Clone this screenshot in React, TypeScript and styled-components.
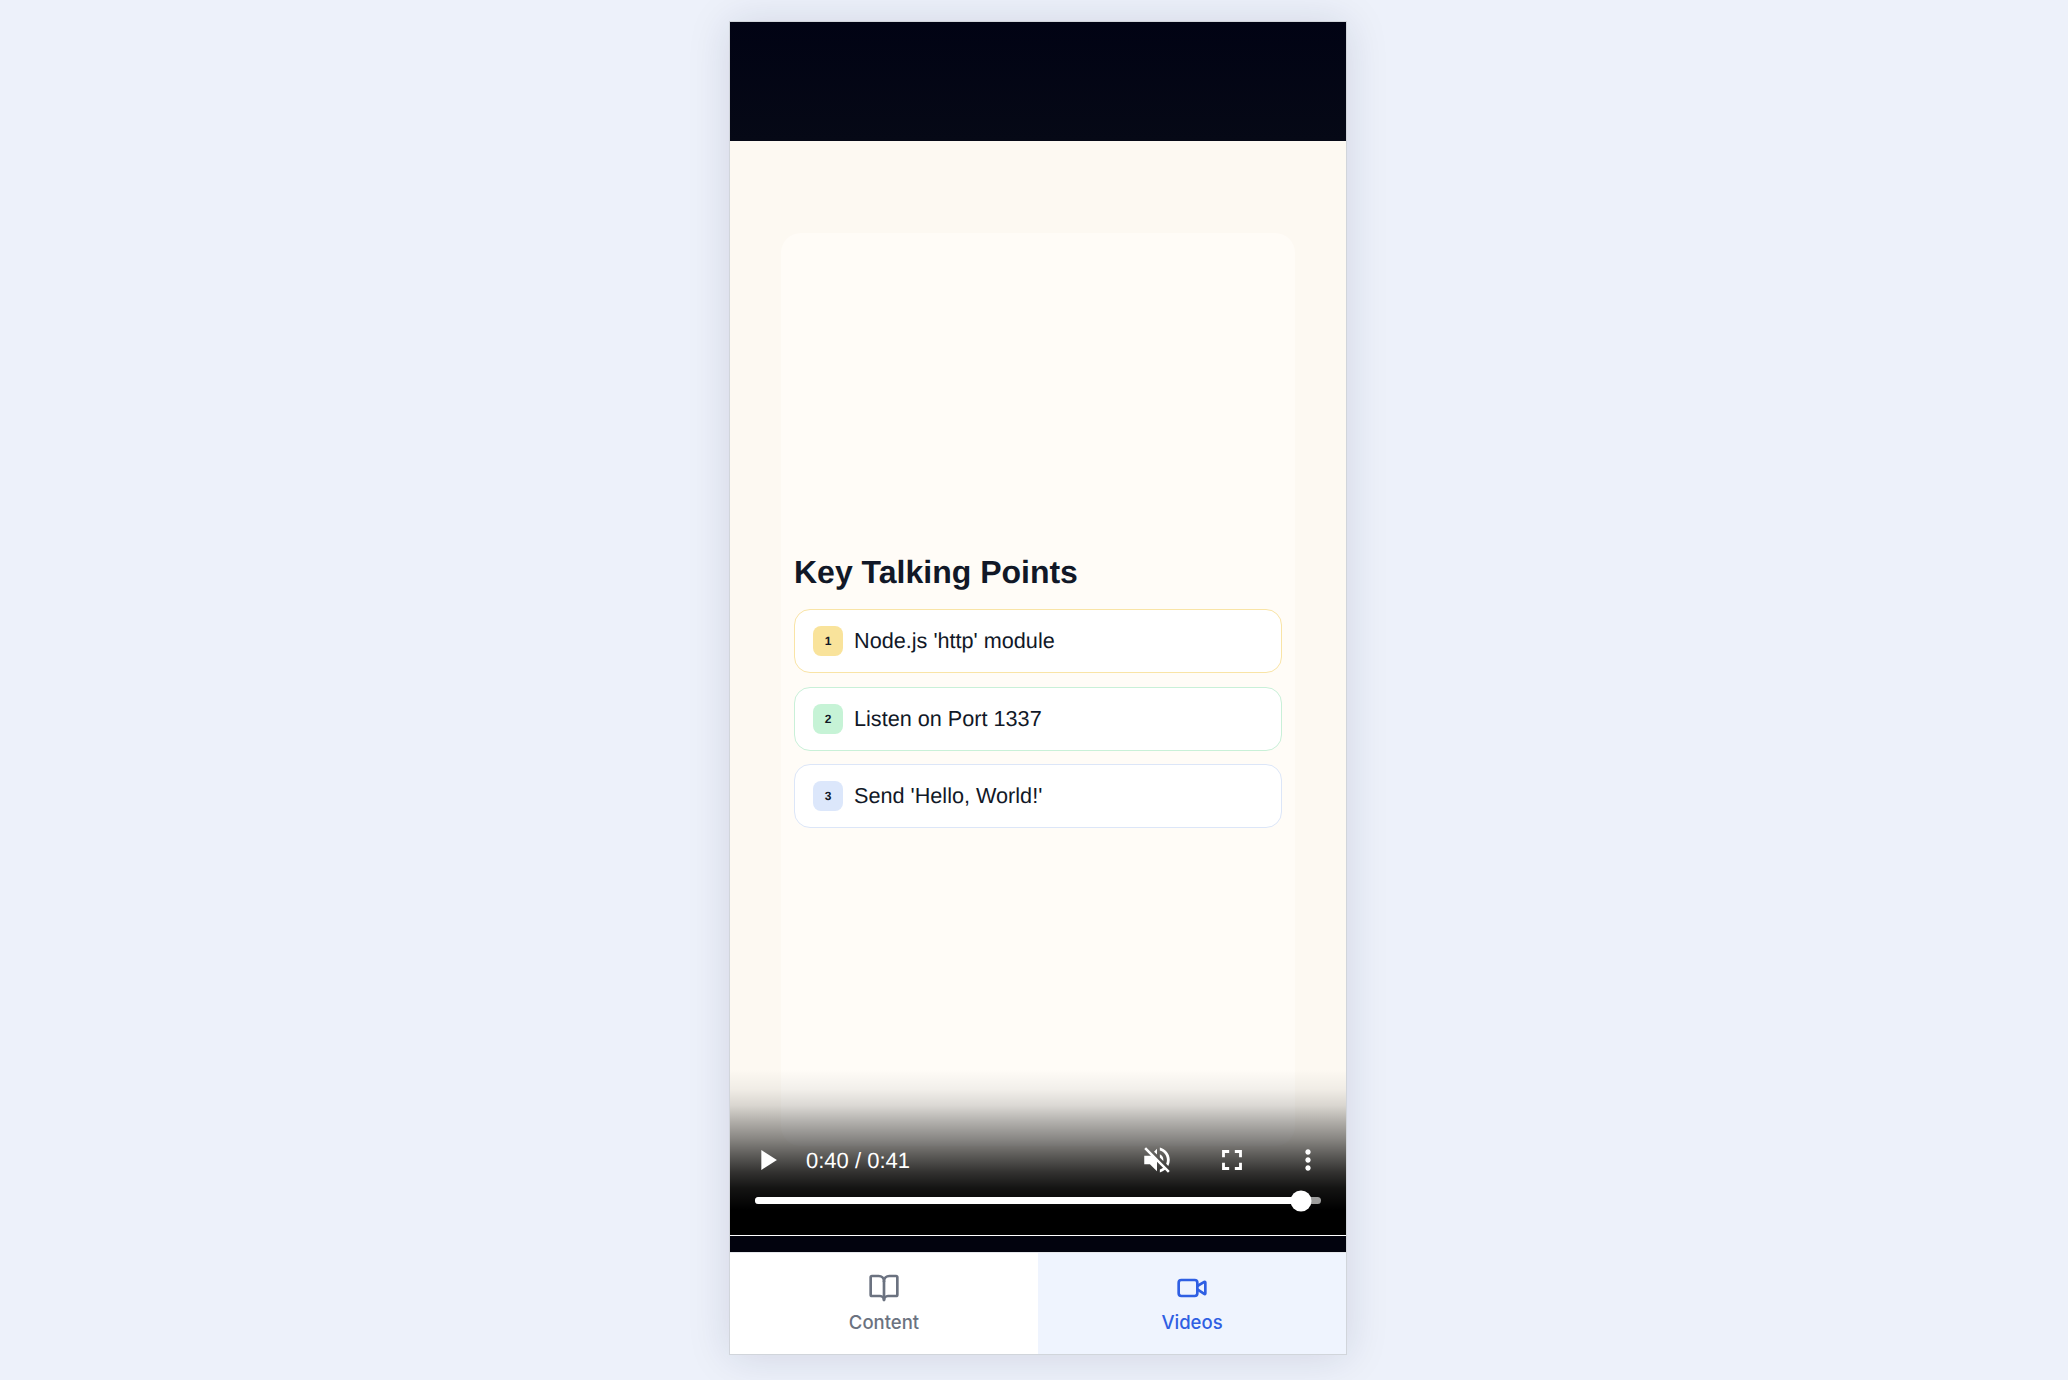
import React from "react";
import styled, { createGlobalStyle } from "styled-components";
import { BookOpen, Video } from "lucide-react";
import { MdPlayArrow, MdVolumeOff, MdFullscreen, MdMoreVert } from "react-icons/md";

const GlobalStyle = createGlobalStyle`
  html, body {
    margin: 0;
    padding: 0;
    background: #edf1fa;
    font-family: "Liberation Sans", Arial, sans-serif;
  }
`;

const Page = styled.div`
  height: 1380px;
  box-sizing: border-box;
  padding: 21px 0 25px 8px;
  display: flex;
  justify-content: center;
  overflow: hidden;
`;

const Phone = styled.div`
  width: 618px;
  box-sizing: border-box;
  border: 1px solid #d1d5db;
  display: flex;
  flex-direction: column;
  background: #fff;
  box-shadow: 0 2px 40px rgba(20, 30, 70, 0.13);
`;

const Player = styled.div`
  flex: 1;
  display: flex;
  flex-direction: column;
  background: #02030e;
`;

const TopBar = styled.div`
  height: 119px;
  flex: none;
  background: linear-gradient(to bottom, #010314, #060916);
`;

const BottomBar = styled.div`
  height: 16px;
  flex: none;
`;

const Stage = styled.div`
  position: relative;
  flex: 1;
  display: flex;
  background: #fdf9f2;
  padding: 92px 51px 89px;
  border-bottom: 1px solid #fff;
  text-rendering: geometricPrecision;
`;

const SlideCard = styled.section`
  flex: 1;
  display: flex;
  flex-direction: column;
  justify-content: center;
  gap: 17.3px;
  padding: 1px 13px 0;
  background: #fffcf7;
  border-radius: 20px;
`;

const Heading = styled.h2`
  margin: 0;
  font-size: 32px;
  line-height: 40px;
  font-weight: 700;
  color: #111827;
`;

const Points = styled.ul`
  list-style: none;
  margin: 0;
  padding: 0;
  display: flex;
  flex-direction: column;
  gap: 13.4px;
`;

const Point = styled.li<{ $border: string }>`
  height: 64px;
  box-sizing: border-box;
  display: flex;
  align-items: center;
  gap: 11px;
  padding: 0 18px;
  background: #fff;
  border: 1.5px solid ${({ $border }) => $border};
  border-radius: 16px;
  font-size: 21.65px;
  color: #111827;
`;

const Badge = styled.span<{ $bg: string }>`
  width: 30px;
  height: 30px;
  flex: none;
  display: flex;
  align-items: center;
  justify-content: center;
  border-radius: 8px;
  background: ${({ $bg }) => $bg};
  font-size: 12px;
  font-weight: 700;
`;

const Controls = styled.div`
  position: absolute;
  left: 0;
  right: 0;
  bottom: 0;
  height: 180px;
  display: flex;
  flex-direction: column;
  justify-content: flex-end;
  padding: 0 25px 31px;
  box-sizing: border-box;
  background: linear-gradient(
    to bottom,
    rgba(0, 0, 0, 0) 8%,
    rgba(0, 0, 0, 0.05) 19%,
    rgba(0, 0, 0, 0.14) 28%,
    rgba(0, 0, 0, 0.3) 37%,
    rgba(0, 0, 0, 0.47) 47%,
    rgba(0, 0, 0, 0.64) 56%,
    rgba(0, 0, 0, 0.8) 65%,
    rgba(0, 0, 0, 0.92) 74%,
    #000 86%
  );
  color: #fff;
`;

const ControlRow = styled.div`
  display: flex;
  align-items: center;
  height: 40px;
  margin: 0 -3px 17px -5px;
`;

const Time = styled.span`
  font-size: 22px;
  margin-left: 22px;
  flex: 1;
  padding-top: 1px;
`;

const ControlIcon = styled.span<{ $gap?: number }>`
  display: flex;
  margin-left: ${({ $gap }) => $gap ?? 0}px;
`;

const Track = styled.div`
  position: relative;
  height: 7px;
  border-radius: 4px;
  background: rgba(255, 255, 255, 0.6);
`;

const Fill = styled.div`
  height: 100%;
  border-radius: 4px;
  background: #fff;
`;

const Thumb = styled.div`
  position: absolute;
  top: 50%;
  width: 21px;
  height: 21px;
  border-radius: 50%;
  background: #fff;
  transform: translate(-50%, -50%);
`;

const Tabs = styled.nav`
  display: grid;
  grid-template-columns: 1fr 1fr;
  height: 102px;
  flex: none;
  border-top: 1px solid #e5e7eb;
  box-sizing: border-box;
`;

const Tab = styled.button<{ $active?: boolean }>`
  border: 0;
  display: flex;
  flex-direction: column;
  align-items: center;
  justify-content: center;
  gap: 7px;
  padding: 0 0 2px;
  font-family: Inter, sans-serif;
  font-size: 18.5px;
  font-weight: 500;
  color: ${({ $active }) => ($active ? "#2f5fe3" : "#6b7280")};
  background: ${({ $active }) => ($active ? "#eff4fe" : "#fff")};
`;

const points = [
  { text: "Node.js 'http' module", border: "#f9e4a6", badge: "#f9e39b" },
  { text: "Listen on Port 1337", border: "#c9f0d8", badge: "#c6f3d6" },
  { text: "Send 'Hello, World!'", border: "#dce6f8", badge: "#dce7fb" },
];

const progress = 96.5;

export default function App() {
  return (
    <Page>
      <GlobalStyle />
      <Phone>
        <Player>
          <TopBar />
          <Stage>
            <SlideCard>
              <Heading>Key Talking Points</Heading>
              <Points>
                {points.map((p, i) => (
                  <Point key={p.text} $border={p.border}>
                    <Badge $bg={p.badge}>{i + 1}</Badge>
                    {p.text}
                  </Point>
                ))}
              </Points>
            </SlideCard>
            <Controls>
              <ControlRow>
                <ControlIcon>
                  <MdPlayArrow size={34} />
                </ControlIcon>
                <Time>0:40 / 0:41</Time>
                <ControlIcon>
                  <MdVolumeOff size={34} />
                </ControlIcon>
                <ControlIcon $gap={41}>
                  <MdFullscreen size={34} />
                </ControlIcon>
                <ControlIcon $gap={43}>
                  <MdMoreVert size={32} />
                </ControlIcon>
              </ControlRow>
              <Track>
                <Fill style={{ width: `${progress}%` }} />
                <Thumb style={{ left: `${progress}%` }} />
              </Track>
            </Controls>
          </Stage>
          <BottomBar />
        </Player>
        <Tabs>
          <Tab>
            <BookOpen size={32} strokeWidth={2} />
            Content
          </Tab>
          <Tab $active>
            <Video size={32} strokeWidth={2} />
            Videos
          </Tab>
        </Tabs>
      </Phone>
    </Page>
  );
}
